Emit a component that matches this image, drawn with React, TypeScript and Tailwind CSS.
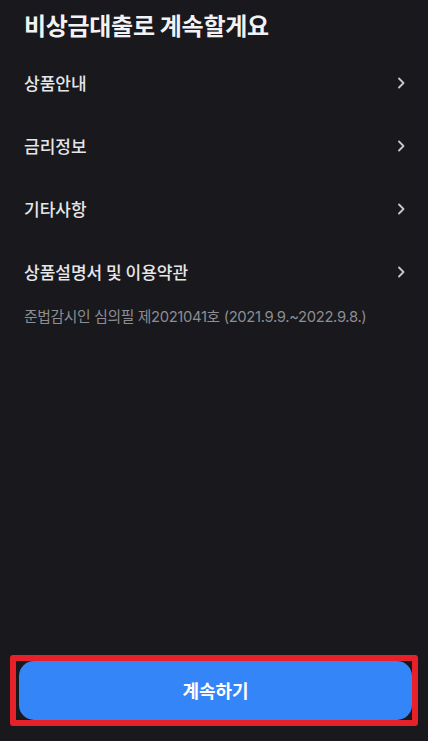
import React from "react";

const font = { fontFamily: '"Noto Sans CJK KR", "Noto Sans", sans-serif' };
const capFont = { fontFamily: 'Inter, "Noto Sans CJK KR", sans-serif' };

function Chevron() {
  return (
    <svg width="10" height="14" viewBox="0 0 10 14" fill="none">
      <path d="M3 2.5L7.5 7L3 11.5" stroke="#c9c9cd" strokeWidth="1.8" strokeLinecap="round" strokeLinejoin="round" />
    </svg>
  );
}

const items = ["상품안내", "금리정보", "기타사항", "상품설명서 및 이용약관"];

export default function App() {
  return (
    <div className="h-[741px] w-full bg-[#18181d] flex flex-col" style={font}>
      <div className="px-6 pt-[9px]">
        <h1 className="text-[24px] leading-[32px] font-bold text-[#f2f2f4] tracking-[-0.3px]">비상금대출로 계속할게요</h1>
      </div>
      <div className="mt-[10px] flex flex-col">
        {items.map((t) => (
          <div key={t} className="h-[63px] pl-6 pr-[22px] flex items-center justify-between">
            <span className="text-[17px] font-medium text-[#e6e6e8]">{t}</span>
            <Chevron />
          </div>
        ))}
      </div>
      <p className="px-6 mt-[4px] text-[14.8px] leading-[20px] text-[#8d8d92] tracking-[-0.35px]" style={capFont}>
        준법감시인 심의필 제2021041호 (2021.9.9.~2022.9.8.)
      </p>
      <div className="flex-1" />
      <div className="px-[10px] pb-[15px]">
        <div className="border-[6px] border-[#e8202a] rounded-[3px] pl-[3px]">
          <button className="w-full h-[59px] rounded-[15px] bg-[#3485f7] text-white text-[18px] font-semibold flex items-center justify-center">
            계속하기
          </button>
        </div>
      </div>
    </div>
  );
}
